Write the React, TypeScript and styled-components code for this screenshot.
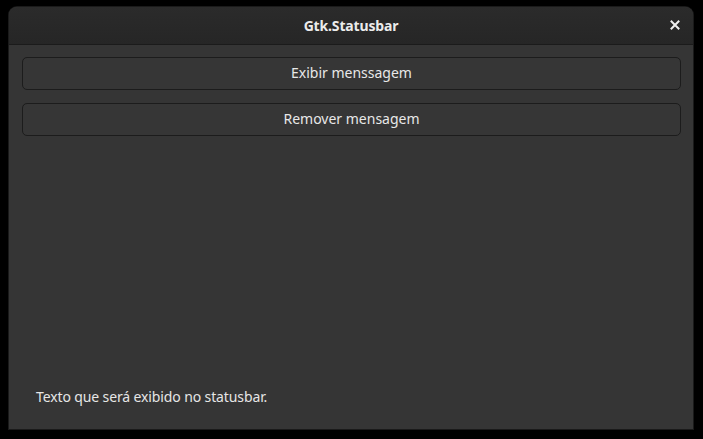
import React from "react";
import styled, { createGlobalStyle } from "styled-components";

const Global = createGlobalStyle`
  html, body { margin: 0; padding: 0; background: #000; }
  body { font-family: "Noto Sans", "Open Sans", sans-serif; }
`;

const Screen = styled.div`
  width: 703px;
  height: 439px;
  padding: 7px 0 0 9px;
  box-sizing: border-box;
  background: #000;
`;

const Window = styled.div`
  width: 684px;
  height: 422px;
  display: flex;
  flex-direction: column;
  background: #353535;
  border-radius: 8px 8px 0 0;
  box-shadow: 0 0 0 1px #1a1a1a;
  overflow: hidden;
`;

const HeaderBar = styled.div`
  height: 37px;
  flex: none;
  position: relative;
  display: flex;
  align-items: center;
  justify-content: center;
  background: linear-gradient(#2b2b2b, #262626);
  border-bottom: 1px solid #1b1b1b;
`;

const Title = styled.div`
  color: #ececec;
  font-weight: 700;
  font-size: 14px;
  letter-spacing: -0.15px;
  padding-bottom: 1px;
`;

const CloseButton = styled.div`
  position: absolute;
  right: 13px;
  top: 13px;
  width: 10px;
  height: 10px;
  display: flex;
`;

const Content = styled.div`
  flex: 1;
  display: flex;
  flex-direction: column;
  padding: 12px 12px 0 13px;
  gap: 13px;
`;

const Button = styled.div`
  height: 33px;
  box-sizing: border-box;
  padding-bottom: 2px;
  border: 1px solid #1c1c1c;
  border-radius: 5px;
  background: #363636;
  display: flex;
  align-items: center;
  justify-content: center;
  color: #e8e8e8;
  font-size: 14px;
`;

const Spacer = styled.div`
  flex: 1;
`;

const Statusbar = styled.div`
  height: 42px;
  padding: 0 0 0 14px;
  display: flex;
  align-items: flex-start;
  color: #e6e6e6;
  font-size: 14px;
  letter-spacing: -0.12px;
`;

export default function App() {
  return (
    <>
      <Global />
      <Screen>
        <Window>
          <HeaderBar>
            <Title>Gtk.Statusbar</Title>
            <CloseButton>
              <svg width="10" height="10" viewBox="0 0 10 10">
                <path d="M1.5 1.5 L8.5 8.5 M8.5 1.5 L1.5 8.5" stroke="#f0f0f0" strokeWidth="2" strokeLinecap="square" />
              </svg>
            </CloseButton>
          </HeaderBar>
          <Content>
            <Button>Exibir menssagem</Button>
            <Button>Remover mensagem</Button>
            <Spacer />
            <Statusbar>Texto que será exibido no statusbar.</Statusbar>
          </Content>
        </Window>
      </Screen>
    </>
  );
}
